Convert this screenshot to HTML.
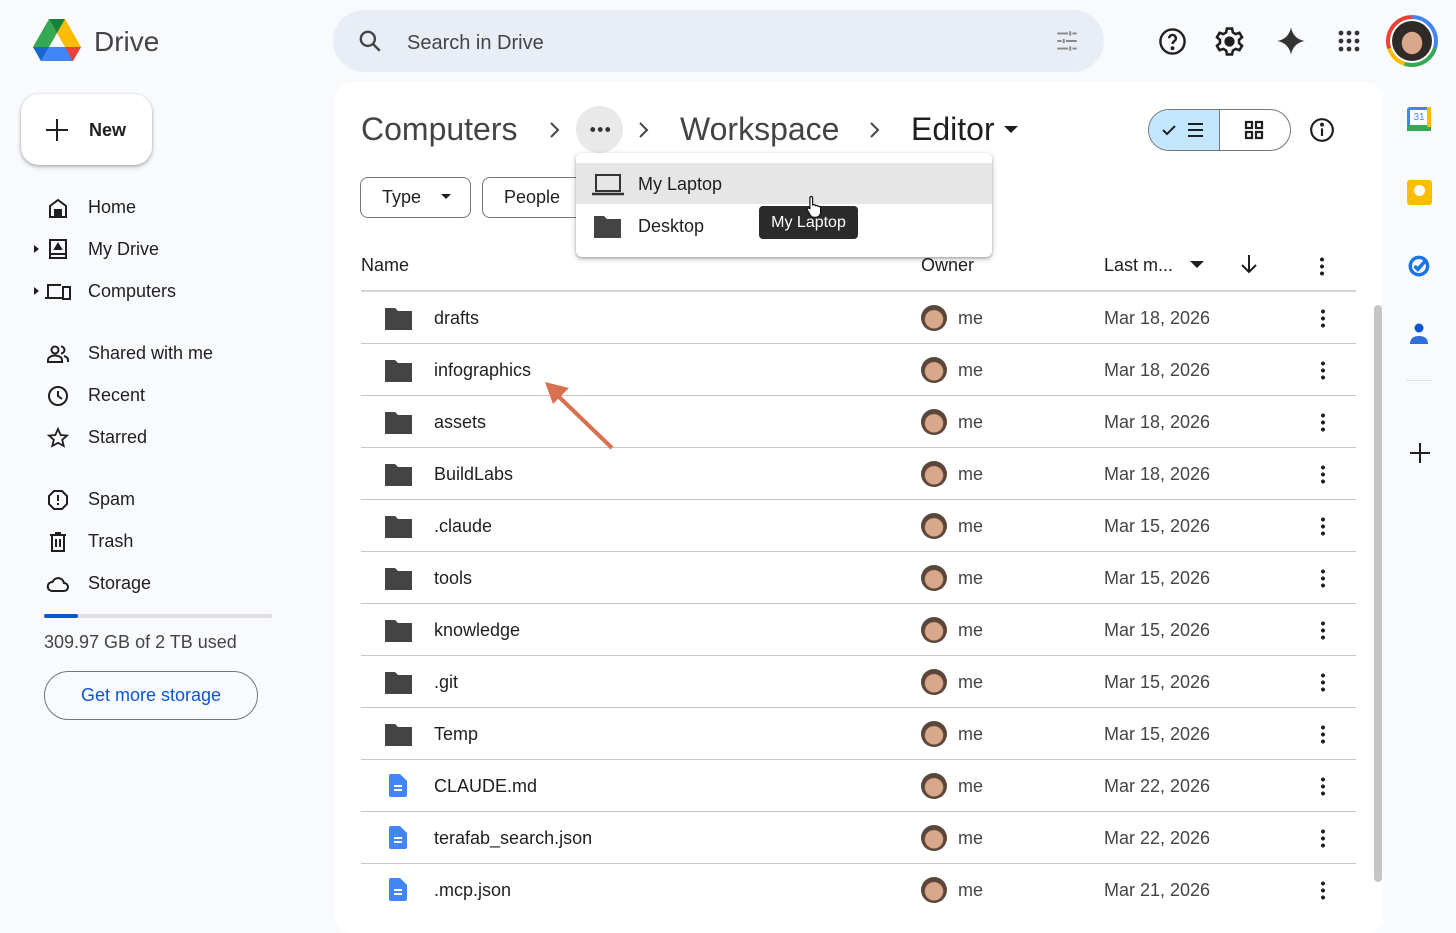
<!DOCTYPE html>
<html><head><meta charset="utf-8"><style>
*{margin:0;padding:0;box-sizing:border-box}
body{width:1456px;height:914px;overflow:hidden;background:#f8fafd;font-family:"Liberation Sans",Arial,sans-serif;color:#1f1f1f;position:relative}
.a{position:absolute}
.nav{position:absolute;left:88px;font-size:18px;color:#1f1f1f}
.ni{position:absolute;left:46px;width:24px;height:24px}
.row{position:absolute;left:361px;width:995px;height:52px;border-bottom:1px solid #c7c7c7}
.row .n{position:absolute;left:73px;top:16px;font-size:18px;color:#1f1f1f}
.row .fi{position:absolute;left:24px;top:14px}
.row .av{position:absolute;left:560px;top:13px;width:26px;height:26px;border-radius:50%;background:radial-gradient(circle at 50% 55%,#d9a88a 0 45%,#5a463a 50%);}
.row .me{position:absolute;left:597px;top:16px;font-size:18px;color:#444}
.row .d{position:absolute;left:743px;top:16px;font-size:18px;color:#444}
.row .k{position:absolute;left:960px;top:16px;width:4px;height:20px;background:radial-gradient(circle,#1f1f1f 1.8px,transparent 2.2px) 0 0/4px 7px repeat-y}
</style></head><body>
<!-- logo -->
<svg class="a" style="left:33px;top:19px" width="48" height="43" viewBox="0 0 48 43"><path d="M16 0L0 28l8 14 16-28z" fill="#34a853"/><path d="M16 0h16l16 28H32z" fill="#fbbc04"/><path d="M8 42h32l8-14H16z" fill="#4285f4"/><path d="M0 28l8 14 8-14z" fill="#1967d2"/><path d="M48 28l-8 14-8-14z" fill="#ea4335"/><path d="M16 0l8 14 8-14z" fill="#188038"/></svg>
<div class="a" style="left:94px;top:26px;font-size:28px;color:#444">Drive</div>
<!-- new -->
<div class="a" style="left:21px;top:94px;width:131px;height:71px;background:#fff;border-radius:18px;box-shadow:0 1px 3px rgba(0,0,0,.3),0 3px 6px rgba(0,0,0,.1)"></div>
<div class="a" style="left:46px;top:129px;width:22px;height:2px;background:#1f1f1f"></div>
<div class="a" style="left:56px;top:119px;width:2px;height:22px;background:#1f1f1f"></div>
<div class="a" style="left:89px;top:120px;font-size:18px;font-weight:bold;color:#1f1f1f">New</div>
<!-- nav -->
<div class="nav" style="top:197px">Home</div>
<div class="nav" style="top:239px">My Drive</div>
<div class="nav" style="top:281px">Computers</div>
<div class="nav" style="top:343px">Shared with me</div>
<div class="nav" style="top:385px">Recent</div>
<div class="nav" style="top:427px">Starred</div>
<div class="nav" style="top:489px">Spam</div>
<div class="nav" style="top:531px">Trash</div>
<div class="nav" style="top:573px">Storage</div>
<svg class="ni" style="top:196px" viewBox="0 0 24 24" fill="none" stroke="#1f1f1f" stroke-width="2"><path d="M4 21V10l8-6 8 6v11z"/><rect x="9" y="14" width="6" height="7" fill="#1f1f1f"/></svg>
<svg class="a" style="left:34px;top:245px" width="5" height="8"><path d="M0 0l5 4-5 4z" fill="#1f1f1f"/></svg>
<svg class="ni" style="top:237px" viewBox="0 0 24 24" fill="none" stroke="#1f1f1f" stroke-width="2"><rect x="4" y="3" width="16" height="18"/><path d="M4 17h16"/><path d="M9 12l3-5 3 5z" fill="#1f1f1f"/></svg>
<svg class="a" style="left:34px;top:287px" width="5" height="8"><path d="M0 0l5 4-5 4z" fill="#1f1f1f"/></svg>
<svg class="a" style="left:44px;top:280px" width="28" height="22" viewBox="0 0 28 22" fill="none" stroke="#1f1f1f" stroke-width="2"><path d="M4 17V5h13"/><path d="M1 18h17"/><rect x="19" y="7" width="7" height="12"/></svg>
<svg class="ni" style="top:342px" viewBox="0 0 24 24" fill="none" stroke="#1f1f1f" stroke-width="2"><circle cx="9" cy="8" r="3.5"/><path d="M2 20v-2c0-3 4-4.5 7-4.5s7 1.5 7 4.5v2z"/><path d="M15 4.5a3.5 3.5 0 010 7M18 14c2 .6 4 1.8 4 4v2"/></svg>
<svg class="ni" style="top:384px" viewBox="0 0 24 24" fill="none" stroke="#1f1f1f" stroke-width="2"><circle cx="12" cy="12" r="9"/><path d="M12 7v5l4 3"/></svg>
<svg class="ni" style="top:426px" viewBox="0 0 24 24" fill="none" stroke="#1f1f1f" stroke-width="1.8"><path d="M12 3l2.7 6 6.3.6-4.8 4.2 1.5 6.2L12 16.8 6.3 20l1.5-6.2L3 9.6 9.3 9z"/></svg>
<svg class="ni" style="top:488px" viewBox="0 0 24 24" fill="none" stroke="#1f1f1f" stroke-width="2"><path d="M8 3h8l5 5v8l-5 5H8l-5-5V8z"/><path d="M12 7v6M12 15v2"/></svg>
<svg class="ni" style="top:530px" viewBox="0 0 24 24" fill="none" stroke="#1f1f1f" stroke-width="2"><path d="M4 5h16M6 5v16h12V5M9 3h6M10 9v8M14 9v8"/></svg>
<svg class="ni" style="top:572px" viewBox="0 0 24 24" fill="none" stroke="#1f1f1f" stroke-width="2"><path d="M6 19h12a4 4 0 000-8 6 6 0 00-11.5-1A4.5 4.5 0 006 19z"/></svg>
<div class="a" style="left:44px;top:614px;width:228px;height:4px;border-radius:2px;background:#e1e1e1"></div>
<div class="a" style="left:44px;top:614px;width:34px;height:4px;border-radius:2px;background:#0b57d0"></div>
<div class="a" style="left:44px;top:632px;font-size:18px;color:#444">309.97 GB of 2 TB used</div>
<div class="a" style="left:44px;top:671px;width:214px;height:49px;border:1px solid #747775;border-radius:25px;text-align:center;line-height:47px;font-size:18px;color:#0b57d0">Get more storage</div>
<!-- search -->
<div class="a" style="left:333px;top:10px;width:771px;height:62px;border-radius:31px;background:#e9eef6"></div>
<svg class="a" style="left:357px;top:28px" width="26" height="26" viewBox="0 0 24 24" fill="none" stroke="#444" stroke-width="2.2"><circle cx="10" cy="10" r="6.5"/><path d="M15 15l6 6"/></svg>
<div class="a" style="left:407px;top:32px;font-size:20px;color:#444">Search in Drive</div>
<svg class="a" style="left:1054px;top:28px" width="26" height="26" viewBox="0 0 24 24" stroke="#888" stroke-width="1.8"><path d="M3 5h10M17 5h4M15 3v4M3 12h4M11 12h10M9 10v4M3 19h10M17 19h4M15 17v4"/></svg>
<!-- top icons -->
<svg class="a" style="left:1158px;top:27px" width="29" height="29" viewBox="0 0 24 24" fill="none" stroke="#1f1f1f" stroke-width="2"><circle cx="12" cy="12" r="10"/><path d="M9.2 9.3a2.8 2.8 0 115 1.8c-1 .9-2.2 1.4-2.2 3" /><circle cx="12" cy="17.5" r=".6" fill="#1f1f1f"/></svg>
<svg class="a" style="left:1214px;top:26px" width="31" height="31" viewBox="0 0 24 24" fill="none" stroke="#1f1f1f" stroke-width="2"><path d="M10 2h4l.6 3 2.2 1.3 2.9-1 2 3.4-2.3 2v2.6l2.3 2-2 3.4-2.9-1-2.2 1.3-.6 3h-4l-.6-3-2.2-1.3-2.9 1-2-3.4 2.3-2v-2.6l-2.3-2 2-3.4 2.9 1L9.4 5z"/><circle cx="12" cy="12" r="3" fill="#1f1f1f"/></svg>
<svg class="a" style="left:1276px;top:26px" width="30" height="30" viewBox="0 0 24 24"><path d="M12 1C13 7 17 11 23 12 17 13 13 17 12 23 11 17 7 13 1 12 7 11 11 7 12 1z" fill="#333"/></svg>
<svg class="a" style="left:1337px;top:29px" width="24" height="24" viewBox="0 0 24 24" fill="#333"><circle cx="4" cy="4" r="2.4"/><circle cx="12" cy="4" r="2.4"/><circle cx="20" cy="4" r="2.4"/><circle cx="4" cy="12" r="2.4"/><circle cx="12" cy="12" r="2.4"/><circle cx="20" cy="12" r="2.4"/><circle cx="4" cy="20" r="2.4"/><circle cx="12" cy="20" r="2.4"/><circle cx="20" cy="20" r="2.4"/></svg>
<div class="a" style="left:1386px;top:15px;width:52px;height:52px;border-radius:50%;background:conic-gradient(#4285f4 0 30%,#34a853 30% 55%,#fbbc04 55% 70%,#ea4335 70% 100%)"></div>
<div class="a" style="left:1390px;top:19px;width:44px;height:44px;border-radius:50%;background:#fff"></div>
<div class="a" style="left:1392px;top:21px;width:40px;height:40px;border-radius:50%;background:radial-gradient(ellipse at 50% 55%,#d9a88a 0 35%,#2e2a28 37%)"></div>
<!-- right sidebar -->
<div class="a" style="left:1407px;top:107px;width:24px;height:24px;border-radius:3px;background:#4285f4"></div>
<div class="a" style="left:1410px;top:110px;width:18px;height:15px;background:#fff;font-size:10px;color:#4285f4;text-align:center;line-height:15px">31</div>
<div class="a" style="left:1407px;top:125px;width:24px;height:6px;background:#34a853"></div>
<div class="a" style="left:1427px;top:107px;width:4px;height:20px;background:#fbbc04"></div>
<div class="a" style="left:1407px;top:180px;width:25px;height:25px;border-radius:3px;background:#fbbc04"></div>
<div class="a" style="left:1414px;top:185px;width:11px;height:11px;border-radius:50%;background:#fff"></div>
<svg class="a" style="left:1407px;top:252px" width="26" height="26" viewBox="0 0 24 24" fill="none" stroke="#1a73e8" stroke-width="3.2"><circle cx="11" cy="13" r="8"/><path d="M7 13l3 3 8-9"/></svg>
<svg class="a" style="left:1408px;top:322px" width="22" height="26" viewBox="0 0 22 26" fill="#0b57d0"><circle cx="11" cy="6" r="4.5"/><path d="M2 22c0-6 4-8 9-8s9 2 9 8z" opacity=".85"/></svg>
<div class="a" style="left:1406px;top:380px;width:26px;height:1px;background:#dde3ea"></div>
<div class="a" style="left:1410px;top:452px;width:20px;height:2px;background:#1f1f1f"></div>
<div class="a" style="left:1419px;top:443px;width:2px;height:20px;background:#1f1f1f"></div>
<!-- main panel -->
<div class="a" style="left:335px;top:83px;width:1048px;height:850px;background:#fff;border-radius:16px"></div>
<div class="a" style="left:1374px;top:305px;width:8px;height:577px;border-radius:4px;background:#c5c5c5"></div>
<div class="a" style="left:361px;top:111px;font-size:32px;color:#444">Computers</div>
<svg class="a" style="left:546px;top:120px" width="16" height="20"><path d="M5 3l7 7-7 7" stroke="#444" stroke-width="2" fill="none"/></svg>
<div class="a" style="left:576px;top:106px;width:47px;height:47px;border-radius:50%;background:#e9e9e9"></div>
<div class="a" style="left:589px;top:127px;width:22px;height:5px;background:radial-gradient(circle,#333 2.2px,transparent 2.6px) 0 0/7.5px 5px repeat-x"></div>
<svg class="a" style="left:635px;top:120px" width="16" height="20"><path d="M5 3l7 7-7 7" stroke="#444" stroke-width="2" fill="none"/></svg>
<div class="a" style="left:680px;top:111px;font-size:32px;color:#444">Workspace</div>
<svg class="a" style="left:866px;top:120px" width="16" height="20"><path d="M5 3l7 7-7 7" stroke="#444" stroke-width="2" fill="none"/></svg>
<div class="a" style="left:911px;top:111px;font-size:32px;color:#1f1f1f">Editor</div>
<svg class="a" style="left:1004px;top:126px" width="14" height="8"><path d="M0 0h14L7 7z" fill="#1f1f1f"/></svg>
<!-- view toggle -->
<div class="a" style="left:1148px;top:109px;width:143px;height:42px;border:1px solid #747775;border-radius:21px;overflow:hidden;background:#fff">
 <div class="a" style="left:0;top:0;width:71px;height:40px;background:#c2e7ff;border-right:1px solid #747775"></div>
</div>
<svg class="a" style="left:1160px;top:119px" width="50" height="22" viewBox="0 0 50 22" fill="none" stroke="#1f1f1f" stroke-width="2"><path d="M3 11l4 4 8-8"/><path d="M28 5h15M28 11h15M28 17h15"/></svg>
<svg class="a" style="left:1243px;top:119px" width="22" height="22" viewBox="0 0 22 22" fill="none" stroke="#1f1f1f" stroke-width="2.2"><rect x="3" y="3" width="6" height="6"/><rect x="13" y="3" width="6" height="6"/><rect x="3" y="13" width="6" height="6"/><rect x="13" y="13" width="6" height="6"/></svg>
<svg class="a" style="left:1309px;top:117px" width="26" height="26" viewBox="0 0 24 24" fill="none" stroke="#1f1f1f" stroke-width="2"><circle cx="12" cy="12" r="10"/><path d="M12 10.5v7"/><circle cx="12" cy="7" r=".8" fill="#1f1f1f"/></svg>
<!-- filters -->
<div class="a" style="left:360px;top:177px;width:111px;height:41px;border:1px solid #747775;border-radius:8px"></div>
<div class="a" style="left:382px;top:187px;font-size:18px;color:#1f1f1f">Type</div>
<svg class="a" style="left:441px;top:194px" width="10" height="6"><path d="M0 0h10L5 5z" fill="#1f1f1f"/></svg>
<div class="a" style="left:482px;top:177px;width:110px;height:41px;border:1px solid #747775;border-radius:8px;border-right:none"></div>
<div class="a" style="left:504px;top:187px;font-size:18px;color:#1f1f1f">People</div>
<!-- header -->
<div class="a" style="left:361px;top:255px;font-size:18px;color:#1f1f1f">Name</div>
<div class="a" style="left:921px;top:255px;font-size:18px;color:#1f1f1f">Owner</div>
<div class="a" style="left:1104px;top:255px;font-size:18px;color:#1f1f1f">Last m...</div>
<svg class="a" style="left:1190px;top:261px" width="14" height="8"><path d="M0 0h14L7 7z" fill="#1f1f1f"/></svg>
<svg class="a" style="left:1239px;top:253px" width="20" height="22" viewBox="0 0 20 22" fill="none" stroke="#1f1f1f" stroke-width="2"><path d="M10 2v17M3 12l7 7 7-7"/></svg>
<div class="a" style="left:1320px;top:256px;width:4px;height:20px;background:radial-gradient(circle,#1f1f1f 1.8px,transparent 2.2px) 0 0/4px 7px repeat-y"></div>
<div class="a" style="left:361px;top:290px;width:995px;height:2px;background:#d5d5d5"></div>
<!-- rows -->
<div id="rows">
<div class="row" style="top:292px"><svg class="fi" width="27" height="24" viewBox="0 0 27 24"><path d="M0 2h10l3 3h14v19H0z" fill="#444"/></svg><span class="n">drafts</span><i class="av"></i><span class="me">me</span><span class="d">Mar 18, 2026</span><i class="k"></i></div>
<div class="row" style="top:344px"><svg class="fi" width="27" height="24" viewBox="0 0 27 24"><path d="M0 2h10l3 3h14v19H0z" fill="#444"/></svg><span class="n">infographics</span><i class="av"></i><span class="me">me</span><span class="d">Mar 18, 2026</span><i class="k"></i></div>
<div class="row" style="top:396px"><svg class="fi" width="27" height="24" viewBox="0 0 27 24"><path d="M0 2h10l3 3h14v19H0z" fill="#444"/></svg><span class="n">assets</span><i class="av"></i><span class="me">me</span><span class="d">Mar 18, 2026</span><i class="k"></i></div>
<div class="row" style="top:448px"><svg class="fi" width="27" height="24" viewBox="0 0 27 24"><path d="M0 2h10l3 3h14v19H0z" fill="#444"/></svg><span class="n">BuildLabs</span><i class="av"></i><span class="me">me</span><span class="d">Mar 18, 2026</span><i class="k"></i></div>
<div class="row" style="top:500px"><svg class="fi" width="27" height="24" viewBox="0 0 27 24"><path d="M0 2h10l3 3h14v19H0z" fill="#444"/></svg><span class="n">.claude</span><i class="av"></i><span class="me">me</span><span class="d">Mar 15, 2026</span><i class="k"></i></div>
<div class="row" style="top:552px"><svg class="fi" width="27" height="24" viewBox="0 0 27 24"><path d="M0 2h10l3 3h14v19H0z" fill="#444"/></svg><span class="n">tools</span><i class="av"></i><span class="me">me</span><span class="d">Mar 15, 2026</span><i class="k"></i></div>
<div class="row" style="top:604px"><svg class="fi" width="27" height="24" viewBox="0 0 27 24"><path d="M0 2h10l3 3h14v19H0z" fill="#444"/></svg><span class="n">knowledge</span><i class="av"></i><span class="me">me</span><span class="d">Mar 15, 2026</span><i class="k"></i></div>
<div class="row" style="top:656px"><svg class="fi" width="27" height="24" viewBox="0 0 27 24"><path d="M0 2h10l3 3h14v19H0z" fill="#444"/></svg><span class="n">.git</span><i class="av"></i><span class="me">me</span><span class="d">Mar 15, 2026</span><i class="k"></i></div>
<div class="row" style="top:708px"><svg class="fi" width="27" height="24" viewBox="0 0 27 24"><path d="M0 2h10l3 3h14v19H0z" fill="#444"/></svg><span class="n">Temp</span><i class="av"></i><span class="me">me</span><span class="d">Mar 15, 2026</span><i class="k"></i></div>
<div class="row" style="top:760px"><svg class="fi" style="left:28px" width="18" height="23" viewBox="0 0 18 23"><path d="M2 0h9l7 7v14a2 2 0 01-2 2H2a2 2 0 01-2-2V2a2 2 0 012-2z" fill="#4285f4"/><path d="M5 12h8M5 16h8" stroke="#fff" stroke-width="2"/></svg><span class="n">CLAUDE.md</span><i class="av"></i><span class="me">me</span><span class="d">Mar 22, 2026</span><i class="k"></i></div>
<div class="row" style="top:812px"><svg class="fi" style="left:28px" width="18" height="23" viewBox="0 0 18 23"><path d="M2 0h9l7 7v14a2 2 0 01-2 2H2a2 2 0 01-2-2V2a2 2 0 012-2z" fill="#4285f4"/><path d="M5 12h8M5 16h8" stroke="#fff" stroke-width="2"/></svg><span class="n">terafab_search.json</span><i class="av"></i><span class="me">me</span><span class="d">Mar 22, 2026</span><i class="k"></i></div>
<div class="row" style="top:864px;border-bottom:none"><svg class="fi" style="left:28px" width="18" height="23" viewBox="0 0 18 23"><path d="M2 0h9l7 7v14a2 2 0 01-2 2H2a2 2 0 01-2-2V2a2 2 0 012-2z" fill="#4285f4"/><path d="M5 12h8M5 16h8" stroke="#fff" stroke-width="2"/></svg><span class="n">.mcp.json</span><i class="av"></i><span class="me">me</span><span class="d">Mar 21, 2026</span><i class="k"></i></div>
</div>
<!-- arrow -->
<svg class="a" style="left:540px;top:378px" width="80" height="76" viewBox="0 0 80 76"><path d="M72 70L14 14" stroke="#d9704f" stroke-width="4"/><path d="M5 4l24 6-16 16z" fill="#d9704f"/></svg>
<!-- dropdown -->
<div class="a" style="left:576px;top:153px;width:416px;height:104px;background:#fff;border-radius:6px;box-shadow:0 2px 6px rgba(0,0,0,.25),0 1px 2px rgba(0,0,0,.2)"></div>
<div class="a" style="left:576px;top:163px;width:416px;height:41px;background:#e6e6e6"></div>
<svg class="a" style="left:591px;top:172px" width="34" height="24" viewBox="0 0 34 24" fill="none" stroke="#333" stroke-width="2"><rect x="5" y="3" width="24" height="16"/><path d="M1 22h32" stroke-width="2.5"/></svg>
<div class="a" style="left:638px;top:174px;font-size:18px;color:#1f1f1f">My Laptop</div>
<svg class="a" style="left:594px;top:214px" width="27" height="24" viewBox="0 0 27 24"><path d="M0 2h10l3 3h14v19H0z" fill="#444"/></svg>
<div class="a" style="left:638px;top:216px;font-size:18px;color:#1f1f1f">Desktop</div>
<div class="a" style="left:759px;top:206px;width:99px;height:33px;background:#2b2b2b;border-radius:4px;color:#fff;font-size:16px;text-align:center;line-height:33px">My Laptop</div>
<svg class="a" style="left:806px;top:195px" width="18" height="24" viewBox="0 0 18 24"><path d="M5 1.5c1 0 1.6.7 1.6 1.6V10l1-.3c.9-.2 1.7.3 1.9 1l.8-.2c.9-.2 1.7.3 1.9 1l.6-.1c1-.1 1.8.6 1.8 1.6v4.5c0 2.5-2 4.8-4.8 4.8H8c-1.8 0-3-1-3.8-2.4L1.3 15c-.5-.9.3-2 1.3-1.8l1.3.4V3.1c0-.9.5-1.6 1.1-1.6z" fill="#fff" stroke="#111" stroke-width="1.2"/></svg>
</body></html>
